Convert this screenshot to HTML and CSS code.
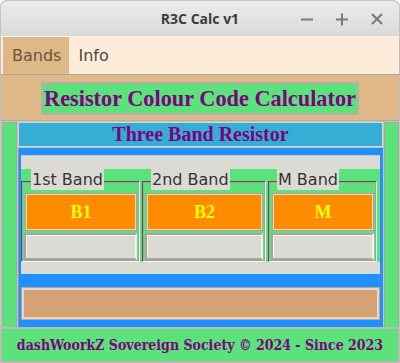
FILE: index.html
```html
<!DOCTYPE html>
<html>

<head>
    <meta charset="UTF-8" />
    <title>R3C Calc v1</title>
    <link rel="stylesheet" href="styles.css">
</head>

<body>
<div class="window">
    <div class="titlebar">
        <div class="title">R3C Calc v1</div>
        <div class="controls">
            <svg width="14" height="14" viewBox="0 0 14 14"><path d="M1 7.5H13" stroke="#7b7b7b" stroke-width="2"/></svg>
            <svg width="14" height="14" viewBox="0 0 14 14"><path d="M1 7.5H13M7 1.5V13.5" stroke="#7b7b7b" stroke-width="2"/></svg>
            <svg width="14" height="14" viewBox="0 0 14 14"><path d="M2 2L12 12M12 2L2 12" stroke="#7b7b7b" stroke-width="2.2"/></svg>
        </div>
    </div>

    <div class="menubar">
        <div class="menuItem active">Bands</div>
        <div class="menuItem">Info</div>
    </div>

    <div class="header">
        <div class="heading">Resistor Colour Code Calculator</div>
    </div>

    <div class="main">
        <div class="side"></div>
        <div class="center">
            <div class="subheading">Three Band Resistor</div>
            <div class="blueBox">
                <div class="panel">
                    <div class="bands">
                        <div class="band band1">
                            <div class="bandLabel">1st Band</div>
                            <div class="bandBody">
                                <div class="code">B1</div>
                                <div class="value"></div>
                            </div>
                        </div>
                        <div class="band band2">
                            <div class="bandLabel">2nd Band</div>
                            <div class="bandBody">
                                <div class="code">B2</div>
                                <div class="value"></div>
                            </div>
                        </div>
                        <div class="band band3">
                            <div class="bandLabel">M Band</div>
                            <div class="bandBody">
                                <div class="code">M</div>
                                <div class="value"></div>
                            </div>
                        </div>
                    </div>
                </div>
                <div class="result"></div>
            </div>
        </div>
        <div class="side"></div>
    </div>

    <div class="footer">dashWoorkZ Sovereign Society © 2024 - Since 2023</div>
</div>
</body>

</html>
```

FILE: styles.css
```css
body {
    margin: 0;
    background-color: white;
}

.window {
    width: 400px;
    height: 363px;
    display: flex;
    flex-direction: column;
    overflow: hidden;
    border-radius: 7px 7px 0 0;
    background-color: #deb887;
}

.titlebar {
    height: 35px;
    display: flex;
    align-items: center;
    justify-content: center;
    position: relative;
    background: linear-gradient(#ececec, #d9d9d9);
    border: 1px solid #c4c4c4;
    border-bottom: 1px solid #f4f4f4;
    border-radius: 7px 7px 0 0;
}

.title {
    font-family: "Open Sans", sans-serif;
    font-weight: bold;
    font-size: 14px;
    color: #3c3c3c;
}

.controls {
    position: absolute;
    right: 15px;
    top: 11px;
    display: flex;
    gap: 21px;
}

.menubar {
    height: 37px;
    display: flex;
    background-color: #fbebd8;
    border-left: 1px solid #bdbdbd;
    border-right: 1px solid #bdbdbd;
    border-bottom: 1px solid #a9a59f;
    padding-left: 2px;
    font-family: "DejaVu Sans", sans-serif;
    font-size: 16px;
}

.menuItem {
    line-height: 37px;
    padding: 0 8px 0 9px;
    color: #4a4a4a;
}

.menuItem.active {
    background-color: #deb887;
    color: #6d5538;
}

.header {
    height: 45px;
    display: flex;
    justify-content: center;
    align-items: flex-start;
    padding-top: 7px;
    box-sizing: border-box;
    border-left: 1px solid #bdbdbd;
    border-right: 1px solid #bdbdbd;
}

.heading {
    height: 33px;
    width: 318px;
    box-sizing: border-box;
    display: flex;
    justify-content: center;
    align-items: center;
    white-space: nowrap;
    background-color: #5be27b;
    border: 2px solid #b3b0aa;
    font-family: "Liberation Serif", serif;
    font-weight: bold;
    font-size: 22.3px;
    color: #800080;
}

.main {
    height: 205px;
    display: flex;
    border-top: 1px solid #b0aca6;
    border-left: 1px solid #c6c6c6;
    border-right: 1px solid #c6c6c6;
    background-color: #c8c4bc;
    padding: 1px 0 0 1px;
}

.side {
    width: 13px;
    background-color: #5be27b;
    border: 1px solid #a9a59f;
    border-bottom: none;
}

.center {
    width: 366px;
    display: flex;
    flex-direction: column;
    padding: 0 1px;
}

.subheading {
    height: 25px;
    box-sizing: border-box;
    display: flex;
    justify-content: center;
    align-items: center;
    background-color: #35aed6;
    border: 1px solid #d8d6d0;
    font-family: "Liberation Serif", serif;
    font-weight: bold;
    font-size: 20px;
    color: #800080;
}

.blueBox {
    flex: 1;
    margin-top: 1px;
    background-color: #1e90ff;
    border-left: 1px solid #6a9fd6;
    padding: 7px 3px 2px 2px;
    display: flex;
    flex-direction: column;
}

.panel {
    height: 119px;
    background-color: #dcdad5;
    padding: 13px 0;
    box-sizing: border-box;
    border-top: 1px solid #c8c6c0;
}

.bands {
    height: 93px;
    display: flex;
    gap: 2px;
    background-color: #5be27b;
}

.band {
    display: flex;
    flex-direction: column;
}

.band1 {
    width: 119px;
}

.band2 {
    width: 124px;
}

.band3 {
    width: 109px;
}

.bandLabel {
    align-self: flex-start;
    height: 21px;
    margin-left: 10px;
    padding: 0 1px;
    background-color: #dcdad5;
    font-family: "DejaVu Sans", sans-serif;
    font-size: 16px;
    line-height: 21px;
    color: #333333;
    position: relative;
    z-index: 1;
}

.band2 .bandLabel,
.band3 .bandLabel {
    margin-left: 9px;
}

.bandBody {
    flex: 1;
    margin-top: -9px;
    border: 2px groove #f2f1ee;
    border-color: #a8a49d #f7f6f3 #f7f6f3 #a8a49d;
    padding: 11px 1px 0 1px;
    display: flex;
    flex-direction: column;
}

.code {
    height: 36px;
    margin: 0 1px 3px 2px;
    box-sizing: border-box;
    display: flex;
    justify-content: center;
    align-items: center;
    background-color: #ff8c00;
    border: 1px solid #f3d8bd;
    box-shadow: 0 0 0 1px #a8a49d;
    font-family: "Liberation Serif", serif;
    font-weight: bold;
    font-size: 18px;
    color: #ffff00;
}

.value {
    flex: 1;
    background-color: #dcdad5;
    border: 2px solid #a8a49d;
    border-color: #a8a49d #f4f3f0 #a8a49d #a8a49d;
    box-shadow: inset 1px 1px 0 #f4f3f0;
}

.result {
    height: 31px;
    margin: 14px 1px 0 1px;
    box-sizing: border-box;
    background-color: #d4a274;
    border: 2px solid #e6d8cb;
    box-shadow: 0 0 0 1px #b5a898;
}

.footer {
    flex: 1;
    display: flex;
    justify-content: center;
    align-items: center;
    background-color: #5be27b;
    border: 2px solid #bdbab4;
    font-family: "DejaVu Serif", serif;
    font-stretch: condensed;
    font-weight: bold;
    font-size: 14px;
    color: #800080;
}
```
